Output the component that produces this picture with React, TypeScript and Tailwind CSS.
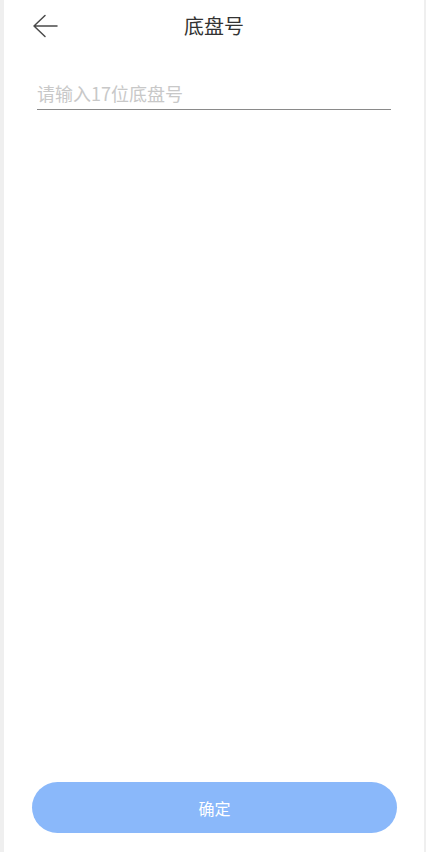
import React, { useState } from "react";

export default function App() {
  const [vin, setVin] = useState("");

  return (
    <div
      className="flex min-h-[852px] bg-[#efefef] pl-[4px] pr-[2px]"
      style={{ fontFamily: '"Noto Sans CJK SC", "Noto Sans", sans-serif' }}
    >
      <div className="flex min-h-[852px] w-full flex-col bg-white">
        <div className="relative flex h-[52px] items-center justify-center">
          <button className="absolute left-[27px] top-[12px] flex h-[28px] w-[28px] items-center justify-center">
            <svg width="26" height="24" viewBox="0 0 26 24" fill="none">
              <path
                d="M13 1.5 L2 12 L13 22.5 M2 12 H25"
                stroke="#4a4a4a"
                strokeWidth="1.5"
                strokeLinecap="round"
                strokeLinejoin="round"
              />
            </svg>
          </button>
          <h1 className="text-[20px] font-normal text-[#333333]">底盘号</h1>
        </div>

        <div className="mt-[24px] pl-[33px] pr-[33px]">
          <input
            value={vin}
            onChange={(e) => setVin(e.target.value)}
            placeholder="请输入17位底盘号"
            className="h-[34px] w-full border-b-[1.5px] border-[#8a8a8a] text-[18px] text-[#333] outline-none placeholder:text-[#c8c8c8]"
          />
        </div>

        <div className="flex-1" />

        <div className="pb-[19px] pl-[28px] pr-[27px]">
          <button className="flex h-[51px] w-full items-center justify-center rounded-full bg-[#8ab8fa] text-[16px] text-white">
            确定
          </button>
        </div>
      </div>
    </div>
  );
}
